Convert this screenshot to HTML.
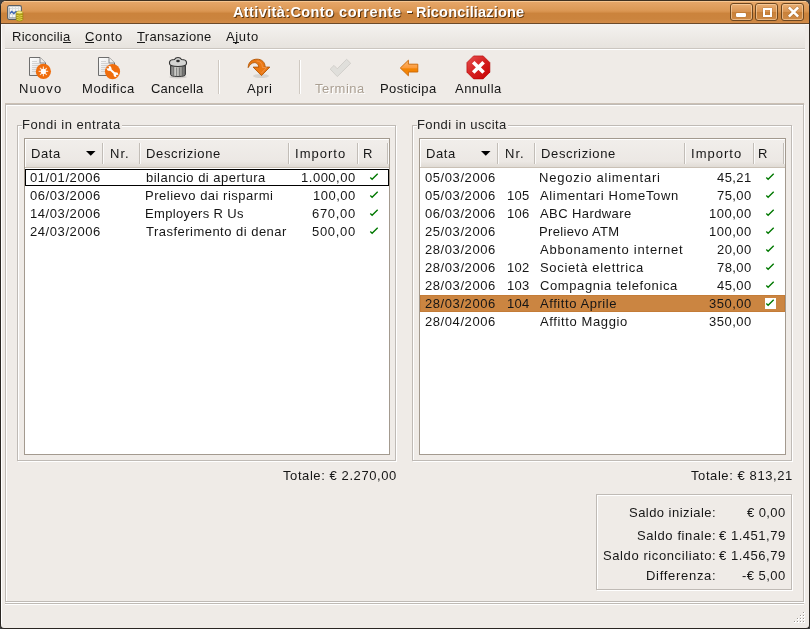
<!DOCTYPE html>
<html><head><meta charset="utf-8">
<style>
*{margin:0;padding:0;box-sizing:border-box}
html,body{width:810px;height:629px;overflow:hidden;background:#404244}
body{position:relative;font-family:"Liberation Sans",sans-serif}
.a{position:absolute}
.t{position:absolute;white-space:pre;will-change:transform;font-family:"Liberation Sans",sans-serif}
#win{left:0;top:0;width:810px;height:629px;background:#efebe7;border-left:1px solid #2a2622;border-right:1px solid #2a2622;border-bottom:1px solid #2a2622;border-top:1px solid #3f3020;border-radius:6px 6px 4px 4px;overflow:hidden}
#title{left:1px;top:1px;width:808px;height:23px;border-radius:5px 5px 0 0;
 background:linear-gradient(#f6c590 0,#f6c590 1px,#e6a668 1px,#db9753 10px,#cb833c 12.5px,#cb843e 18px,#d18b48 22px,#6b4a2a 22px,#6b4a2a 23px)}
.wb{position:absolute;top:3px;width:23px;height:18px;border:1px solid #6d4720;border-radius:3px;
 background:linear-gradient(#e9ae73,#d79250 50%,#c98139 50%,#cf8a46);box-shadow:inset 0 0 0 1px rgba(255,220,180,.55)}
#menubar{left:1px;top:24px;width:808px;height:25px;background:#efebe7}
#menuin{left:5px;top:24px;width:800px;height:25px;background:linear-gradient(#f4f2ef,#e7e3de);border-bottom:1px solid #cbc6c0}
.sep{position:absolute;top:60px;width:2px;height:34px;border-left:1px solid #cfc9c2;border-right:1px solid #fff}
.etch{position:absolute;border:1px solid #bfbab5;box-shadow:1px 1px 0 #fff, inset 1px 1px 0 #fff}
.tv{position:absolute;background:#fff;border:1px solid #a39a8f}
.hdr{position:absolute;left:0;top:0;height:29px;background:linear-gradient(#f1eeeb,#ece8e4 80%,#e0dbd5);border-bottom:1px solid #c9c0b5;box-shadow:inset 1px 1px 0 #fff}
.hs{position:absolute;top:4px;width:2px;height:21px;border-left:1px solid #c2bdb7;border-right:1px solid #fbfaf9}
.ck{position:absolute;color:#008000;font-size:13px}
</style></head><body>
<div id="win" class="a"></div>
<div id="title" class="a"></div>
<div class="wb" style="left:730px"></div>
<div class="wb" style="left:755px"></div>
<div class="wb" style="left:781px"></div>
<div class="a" style="left:1px;top:24px;width:1px;height:600px;background:#fff"></div>
<div class="a" style="left:1px;top:24px;width:808px;height:1px;background:#f8f6f4"></div>
<div id="menuin" class="a"></div>
<div class="a" style="left:5px;top:49px;width:800px;height:1px;background:#fff"></div>
<!-- mnemonics underlines -->
<div class="a" style="left:63px;top:42px;width:8px;height:1px;background:#1a1a1a"></div>
<div class="a" style="left:85px;top:42px;width:9px;height:1px;background:#1a1a1a"></div>
<div class="a" style="left:137px;top:42px;width:8px;height:1px;background:#1a1a1a"></div>
<div class="a" style="left:233px;top:42px;width:6px;height:1px;background:#1a1a1a"></div>
<!-- toolbar separators -->
<div class="sep" style="left:218px"></div>
<div class="sep" style="left:299px"></div>
<!-- content frame -->
<div class="a" style="left:5px;top:103px;width:799px;height:1px;background:#cbc0b4"></div>
<div class="etch" style="left:5px;top:104px;width:799px;height:498px"></div>
<!-- frames -->
<div class="etch" style="left:17px;top:125px;width:379px;height:336px"></div>
<div class="a" style="left:22px;top:118px;width:100px;height:12px;background:#efebe7"></div>
<div class="etch" style="left:412px;top:125px;width:380px;height:336px"></div>
<div class="a" style="left:417px;top:118px;width:91px;height:12px;background:#efebe7"></div>
<!-- treeviews -->
<div class="tv" style="left:24px;top:138px;width:366px;height:317px">
  <div class="hdr" style="width:364px"></div>
</div>
<div class="tv" style="left:419px;top:138px;width:367px;height:317px">
  <div class="hdr" style="width:365px"></div>
</div>
<!-- header separators -->
<div class="hs" style="left:102px;top:143px"></div>
<div class="hs" style="left:139px;top:143px"></div>
<div class="hs" style="left:288px;top:143px"></div>
<div class="hs" style="left:357px;top:143px"></div>
<div class="hs" style="left:387px;top:143px"></div>
<div class="hs" style="left:497px;top:143px"></div>
<div class="hs" style="left:534px;top:143px"></div>
<div class="hs" style="left:684px;top:143px"></div>
<div class="hs" style="left:753px;top:143px"></div>
<div class="hs" style="left:783px;top:143px"></div>
<!-- sort arrows -->
<svg class="a" style="left:85px;top:150px" width="12" height="8"><path d="M1 1H10.5L5.75 5.75Z" fill="#000"/></svg>
<svg class="a" style="left:480px;top:150px" width="12" height="8"><path d="M1 1H10.5L5.75 5.75Z" fill="#000"/></svg>
<!-- focus rect -->
<div class="a" style="left:25px;top:169px;width:364px;height:17px;border:1px solid #000"></div>
<!-- selected row -->
<div class="a" style="left:420px;top:295px;width:365px;height:17px;background:#cb8541;border:1px solid #c47c37"></div>
<!-- summary box -->
<div class="etch" style="left:596px;top:494px;width:196px;height:96px"></div>
<!-- statusbar separator -->
<div class="a" style="left:5px;top:603px;width:799px;height:2px;border-top:1px solid #bfbab5;border-bottom:1px solid #fff"></div>
<!--ICONS-->

<!-- window icon -->
<svg class="a" style="left:0;top:0" width="30" height="24" viewBox="0 0 30 24">
 <rect x="7.6" y="5.6" width="13.8" height="13.8" rx="1.6" fill="#f6f6f4" stroke="#5a5e62" stroke-width="1.1"/>
 <path d="M9.5 8.5h10M9.5 11.5h10M9.5 14.5h10M12.5 7v11M15.5 7v11M18.5 7v11" stroke="#dcdedd" stroke-width="1"/>
 <path d="M9.2 18V7.5M9.2 17.8h11" stroke="#9a9ea2" stroke-width="1"/>
 <path d="M10 13.5l1.8-2 2 2 2.3-2 1.5 .8" stroke="#3a62b0" stroke-width="1.3" fill="none"/>
 <path d="M16.2 12.5v7q0 1.5 3.3 1.5t3.3-1.5v-7z" fill="#c4b418" stroke="#8a7a0a" stroke-width=".6"/>
 <path d="M16.3 14.6q3.2 1.4 6.4 0M16.3 16.6q3.2 1.4 6.4 0M16.3 18.6q3.2 1.4 6.4 0" stroke="#8f800c" stroke-width=".7" fill="none"/>
 <path d="M16.6 15.4q2.9 1.2 5.8 0M16.6 17.4q2.9 1.2 5.8 0M16.6 19.4q2.9 1.2 5.8 0" stroke="#f0e46a" stroke-width=".7" fill="none"/>
 <ellipse cx="19.5" cy="12.4" rx="3.2" ry="1.4" fill="#f6ee8a" stroke="#9a8a10" stroke-width=".5"/>
</svg>
<!-- window buttons glyphs -->
<div class="a" style="left:736px;top:13px;width:10px;height:3.5px;background:#fff;border-radius:1px;box-shadow:0 0 1px rgba(80,40,0,.6)"></div>
<div class="a" style="left:762.5px;top:7.5px;width:9.5px;height:9.5px;border:2px solid #fff;box-shadow:0 0 1px rgba(80,40,0,.6), inset 0 0 1px rgba(80,40,0,.6)"></div>
<svg class="a" style="left:786px;top:5px" width="14" height="14" viewBox="-0.5 0 14 14">
 <path d="M3.3 3.3L10.7 10.7M10.7 3.3L3.3 10.7" stroke="#7a4a1a" stroke-width="3.6" stroke-linecap="square" opacity=".35"/>
 <path d="M3.3 3.3L10.7 10.7M10.7 3.3L3.3 10.7" stroke="#fff" stroke-width="2.6" stroke-linecap="square"/>
</svg>
<!-- Nuovo -->
<svg class="a" style="left:26px;top:54px" width="28" height="28" viewBox="26 54 28 28">
 <defs><linearGradient id="pg" x1="0" y1="0" x2="1" y2="1"><stop offset="0" stop-color="#ffffff"/><stop offset="1" stop-color="#d8d8d8"/></linearGradient></defs>
 <path d="M29.5 57.5H40L45.5 63V75.5H29.5Z" fill="url(#pg)" stroke="#6e6e6e"/>
 <path d="M40 57.5V63H45.5" fill="#eeeeee" stroke="#6e6e6e" stroke-width=".8"/>
 <path d="M32 61.5h5M32 63.5h8M32 65.5h9M32 67.5h9M32 69.5h7M32 71.5h6" stroke="#c4c4c4" stroke-width=".7"/>
 <circle cx="43.4" cy="71.4" r="7.6" fill="#f06d0c"/>
 <path d="M43.4 66.6v9.6M38.6 71.4h9.6M40 68l6.8 6.8M46.8 68l-6.8 6.8" stroke="#fff" stroke-width="1.2" opacity=".75"/>
 <circle cx="43.4" cy="71.4" r="2.6" fill="#fff" opacity=".95"/>
</svg>
<!-- Modifica -->
<svg class="a" style="left:94px;top:54px" width="28" height="28" viewBox="94 54 28 28">
 <path d="M98.5 57.5H109L114.5 63V75.5H98.5Z" fill="url(#pg)" stroke="#6e6e6e"/>
 <path d="M109 57.5V63H114.5" fill="#eeeeee" stroke="#6e6e6e" stroke-width=".8"/>
 <path d="M101 61.5h5M101 63.5h8M101 65.5h9M101 67.5h9M101 69.5h7M101 71.5h6" stroke="#c4c4c4" stroke-width=".7"/>
 <circle cx="112.5" cy="71.6" r="7.6" fill="#f06d0c"/>
 <path d="M109.2 68.6L115.8 74.6" stroke="#fff" stroke-width="2"/>
 <circle cx="109.1" cy="68.5" r="2.4" fill="#fff"/><circle cx="115.9" cy="74.7" r="2.4" fill="#fff"/>
 <circle cx="107.9" cy="67.4" r="1.1" fill="#f06d0c"/><circle cx="117.1" cy="75.8" r="1.1" fill="#f06d0c"/>
</svg>
<!-- Cancella -->
<svg class="a" style="left:164px;top:52px" width="28" height="28" viewBox="164 52 28 28">
 <defs><linearGradient id="tb" x1="0" x2="1"><stop offset="0" stop-color="#6a6a6a"/><stop offset=".35" stop-color="#d0d0cc"/><stop offset=".7" stop-color="#9a9a96"/><stop offset="1" stop-color="#5c5c5c"/></linearGradient></defs>
 <ellipse cx="178" cy="77" rx="9" ry="1.5" fill="#000" opacity=".12"/>
 <path d="M170.5 65.5V74.5Q170.5 76.5 178 76.5Q185.5 76.5 185.5 74.5V65.5Z" fill="url(#tb)" stroke="#3c3c3c"/>
 <path d="M173.5 67v8.5M176.5 67.5v9M179.5 67.5v9M182.5 67v8.5" stroke="#555" stroke-width=".8" opacity=".7"/>
 <path d="M169.5 62.5Q169.5 59.5 174.5 59.5Q175.5 57.5 178 57.5Q180.5 57.5 181.5 59.5Q186.5 59.5 186.5 62.5V63.5Q186.5 66.5 178 66.5Q169.5 66.5 169.5 63.5Z" fill="#d4d4d2" stroke="#333" stroke-width="1.1"/>
 <ellipse cx="178" cy="61" rx="1.8" ry="1.2" fill="#2a2a2a"/>
</svg>
<!-- Apri -->
<svg class="a" style="left:245px;top:54px" width="28" height="28" viewBox="245 54 28 28">
 <ellipse cx="261" cy="76" rx="8" ry="2" fill="#000" opacity=".1"/>
 <path d="M248.2 67.6C248.3 62 252 59.2 257 59.2C262 59.2 265 62.3 265.2 67.1H269.8L261.5 75.6L253.1 67.1H258.8C258.6 64.2 256.6 62.4 254.2 62.6C251.6 62.8 249.6 65 248.2 67.6Z" fill="#ea7812" stroke="#b25400" stroke-width=".9" stroke-linejoin="round"/>
 <path d="M256.5 61Q262 61 262.5 67.5H266.5L261.5 73" fill="none" stroke="#f5a060" stroke-width=".8" opacity=".8"/>
</svg>
<!-- Termina -->
<svg class="a" style="left:326px;top:56px" width="28" height="24" viewBox="326 56 28 24">
 <path d="M330.2 69.1L334 65.4L337.3 68.8L346.6 59.3L350.7 63.3L337.3 76.6Z" fill="#e0dfdb" stroke="#cfcdc8" stroke-width=".9" stroke-linejoin="round"/>
</svg>
<!-- Posticipa -->
<svg class="a" style="left:395px;top:54px" width="28" height="28" viewBox="395 54 28 28">
 <defs><linearGradient id="og" x1="0" y1="0" x2="0" y2="1"><stop offset="0" stop-color="#ffb870"/><stop offset=".5" stop-color="#fb9a3a"/><stop offset=".55" stop-color="#f28200"/><stop offset="1" stop-color="#f58a10"/></linearGradient></defs>
 <path d="M400.3 68L408.4 60.2V64.2H417.8V72H408.4V75.8Z" fill="url(#og)" stroke="#c96400" stroke-width=".9" stroke-linejoin="round"/>
</svg>
<!-- Annulla -->
<svg class="a" style="left:464px;top:53px" width="28" height="28" viewBox="464 53 28 28">
 <defs><linearGradient id="rg" x1="0" y1="0" x2="1" y2="1"><stop offset="0" stop-color="#e85050"/><stop offset=".5" stop-color="#d42020"/><stop offset="1" stop-color="#c80000"/></linearGradient></defs>
 <path d="M473.6 55.9H483.2L489.9 62.6V72.2L483.2 78.9H473.6L466.9 72.2V62.6Z" fill="url(#rg)" stroke="#b00000" stroke-width=".6"/>
 <path d="M473.2 62.2L483.6 72.6M483.6 62.2L473.2 72.6" stroke="#fff" stroke-width="3.6"/>
</svg>
<!-- checks -->
<svg class="a" style="left:369px;top:173px" width="11" height="11" viewBox="0 0 11 11"><path d="M1.3 4.6L3.1 6.3L8.7 0.7" fill="none" stroke="#007800" stroke-width="1.35"/></svg>
<svg class="a" style="left:369px;top:191px" width="11" height="11" viewBox="0 0 11 11"><path d="M1.3 4.6L3.1 6.3L8.7 0.7" fill="none" stroke="#007800" stroke-width="1.35"/></svg>
<svg class="a" style="left:369px;top:209px" width="11" height="11" viewBox="0 0 11 11"><path d="M1.3 4.6L3.1 6.3L8.7 0.7" fill="none" stroke="#007800" stroke-width="1.35"/></svg>
<svg class="a" style="left:369px;top:227px" width="11" height="11" viewBox="0 0 11 11"><path d="M1.3 4.6L3.1 6.3L8.7 0.7" fill="none" stroke="#007800" stroke-width="1.35"/></svg>
<svg class="a" style="left:765px;top:173px" width="11" height="11" viewBox="0 0 11 11"><path d="M1.3 4.6L3.1 6.3L8.7 0.7" fill="none" stroke="#007800" stroke-width="1.35"/></svg>
<svg class="a" style="left:765px;top:191px" width="11" height="11" viewBox="0 0 11 11"><path d="M1.3 4.6L3.1 6.3L8.7 0.7" fill="none" stroke="#007800" stroke-width="1.35"/></svg>
<svg class="a" style="left:765px;top:209px" width="11" height="11" viewBox="0 0 11 11"><path d="M1.3 4.6L3.1 6.3L8.7 0.7" fill="none" stroke="#007800" stroke-width="1.35"/></svg>
<svg class="a" style="left:765px;top:227px" width="11" height="11" viewBox="0 0 11 11"><path d="M1.3 4.6L3.1 6.3L8.7 0.7" fill="none" stroke="#007800" stroke-width="1.35"/></svg>
<svg class="a" style="left:765px;top:245px" width="11" height="11" viewBox="0 0 11 11"><path d="M1.3 4.6L3.1 6.3L8.7 0.7" fill="none" stroke="#007800" stroke-width="1.35"/></svg>
<svg class="a" style="left:765px;top:263px" width="11" height="11" viewBox="0 0 11 11"><path d="M1.3 4.6L3.1 6.3L8.7 0.7" fill="none" stroke="#007800" stroke-width="1.35"/></svg>
<svg class="a" style="left:765px;top:281px" width="11" height="11" viewBox="0 0 11 11"><path d="M1.3 4.6L3.1 6.3L8.7 0.7" fill="none" stroke="#007800" stroke-width="1.35"/></svg>
<div class="a" style="left:765px;top:298px;width:11px;height:11px;background:#fff;"></div><svg class="a" style="left:765px;top:299px" width="11" height="11" viewBox="0 0 11 11"><path d="M1.3 4.6L3.1 6.3L8.7 0.7" fill="none" stroke="#007800" stroke-width="1.35"/></svg>
<div class="a" style="left:794px;top:621px;width:2px;height:2px;background:#fff"></div><div class="a" style="left:794px;top:621px;width:1px;height:1px;background:#9a9590"></div><div class="a" style="left:797px;top:618px;width:2px;height:2px;background:#fff"></div><div class="a" style="left:797px;top:618px;width:1px;height:1px;background:#9a9590"></div><div class="a" style="left:797px;top:621px;width:2px;height:2px;background:#fff"></div><div class="a" style="left:797px;top:621px;width:1px;height:1px;background:#9a9590"></div><div class="a" style="left:800px;top:615px;width:2px;height:2px;background:#fff"></div><div class="a" style="left:800px;top:615px;width:1px;height:1px;background:#9a9590"></div><div class="a" style="left:800px;top:618px;width:2px;height:2px;background:#fff"></div><div class="a" style="left:800px;top:618px;width:1px;height:1px;background:#9a9590"></div><div class="a" style="left:800px;top:621px;width:2px;height:2px;background:#fff"></div><div class="a" style="left:800px;top:621px;width:1px;height:1px;background:#9a9590"></div><div class="a" style="left:803px;top:612px;width:2px;height:2px;background:#fff"></div><div class="a" style="left:803px;top:612px;width:1px;height:1px;background:#9a9590"></div><div class="a" style="left:803px;top:615px;width:2px;height:2px;background:#fff"></div><div class="a" style="left:803px;top:615px;width:1px;height:1px;background:#9a9590"></div><div class="a" style="left:803px;top:618px;width:2px;height:2px;background:#fff"></div><div class="a" style="left:803px;top:618px;width:1px;height:1px;background:#9a9590"></div><div class="a" style="left:803px;top:621px;width:2px;height:2px;background:#fff"></div><div class="a" style="left:803px;top:621px;width:1px;height:1px;background:#9a9590"></div>
<div class="a" style="left:407px;top:11px;width:5px;height:2px;background:#fff;box-shadow:1px 1px 0 rgba(50,25,0,.75)"></div>
<div class="t" style="left:12.00px;top:30px;font-size:13px;line-height:13px;font-weight:400;color:#161616;letter-spacing:0.289px;">Riconcilia</div>
<div class="t" style="left:85.00px;top:30px;font-size:13px;line-height:13px;font-weight:400;color:#161616;letter-spacing:0.635px;">Conto</div>
<div class="t" style="left:137.00px;top:30px;font-size:13px;line-height:13px;font-weight:400;color:#161616;letter-spacing:0.317px;">Transazione</div>
<div class="t" style="left:226.00px;top:30px;font-size:13px;line-height:13px;font-weight:400;color:#161616;letter-spacing:0.650px;">Ajuto</div>
<div class="t" style="left:19.00px;top:82px;font-size:13px;line-height:13px;font-weight:400;color:#161616;letter-spacing:1.163px;">Nuovo</div>
<div class="t" style="left:82.00px;top:82px;font-size:13px;line-height:13px;font-weight:400;color:#161616;letter-spacing:0.546px;">Modifica</div>
<div class="t" style="left:151.00px;top:82px;font-size:13px;line-height:13px;font-weight:400;color:#161616;letter-spacing:0.235px;">Cancella</div>
<div class="t" style="left:247.00px;top:82px;font-size:13px;line-height:13px;font-weight:400;color:#161616;letter-spacing:0.590px;">Apri</div>
<div class="t" style="left:315.00px;top:82px;font-size:13px;line-height:13px;font-weight:400;color:#aa9f92;letter-spacing:0.499px;text-shadow:1px 1px 0 #fff;">Termina</div>
<div class="t" style="left:380.00px;top:82px;font-size:13px;line-height:13px;font-weight:400;color:#161616;letter-spacing:0.435px;">Posticipa</div>
<div class="t" style="left:455.00px;top:82px;font-size:13px;line-height:13px;font-weight:400;color:#161616;letter-spacing:0.477px;">Annulla</div>
<div class="t" style="left:22.00px;top:118px;font-size:13px;line-height:13px;font-weight:400;color:#222;letter-spacing:0.526px;">Fondi in entrata</div>
<div class="t" style="left:417.00px;top:118px;font-size:13px;line-height:13px;font-weight:400;color:#222;letter-spacing:0.386px;">Fondi in uscita</div>
<div class="t" style="left:31.00px;top:147px;font-size:13px;line-height:13px;font-weight:400;color:#161616;letter-spacing:0.590px;">Data</div>
<div class="t" style="left:110.00px;top:147px;font-size:13px;line-height:13px;font-weight:400;color:#161616;letter-spacing:1.000px;">Nr.</div>
<div class="t" style="left:146.00px;top:147px;font-size:13px;line-height:13px;font-weight:400;color:#161616;letter-spacing:0.632px;">Descrizione</div>
<div class="t" style="left:295.00px;top:147px;font-size:13px;line-height:13px;font-weight:400;color:#161616;letter-spacing:1.026px;">Importo</div>
<div class="t" style="left:363.00px;top:147px;font-size:13px;line-height:13px;font-weight:400;color:#161616;letter-spacing:0.000px;">R</div>
<div class="t" style="left:426.00px;top:147px;font-size:13px;line-height:13px;font-weight:400;color:#161616;letter-spacing:0.590px;">Data</div>
<div class="t" style="left:505.00px;top:147px;font-size:13px;line-height:13px;font-weight:400;color:#161616;letter-spacing:1.000px;">Nr.</div>
<div class="t" style="left:541.00px;top:147px;font-size:13px;line-height:13px;font-weight:400;color:#161616;letter-spacing:0.632px;">Descrizione</div>
<div class="t" style="left:691.00px;top:147px;font-size:13px;line-height:13px;font-weight:400;color:#161616;letter-spacing:1.026px;">Importo</div>
<div class="t" style="left:758.00px;top:147px;font-size:13px;line-height:13px;font-weight:400;color:#161616;letter-spacing:0.000px;">R</div>
<div class="t" style="left:30.00px;top:171px;font-size:13px;line-height:13px;font-weight:400;color:#161616;letter-spacing:0.574px;">01/01/2006</div>
<div class="t" style="left:146.00px;top:171px;font-size:13px;line-height:13px;font-weight:400;color:#161616;letter-spacing:0.494px;">bilancio di apertura</div>
<div class="t" style="left:301.00px;top:171px;font-size:13px;line-height:13px;font-weight:400;color:#161616;letter-spacing:0.518px;">1.000,00</div>
<div class="t" style="left:30.00px;top:189px;font-size:13px;line-height:13px;font-weight:400;color:#161616;letter-spacing:0.574px;">06/03/2006</div>
<div class="t" style="left:145.00px;top:189px;font-size:13px;line-height:13px;font-weight:400;color:#161616;letter-spacing:0.506px;">Prelievo dai risparmi</div>
<div class="t" style="left:313.00px;top:189px;font-size:13px;line-height:13px;font-weight:400;color:#161616;letter-spacing:0.494px;">100,00</div>
<div class="t" style="left:30.00px;top:207px;font-size:13px;line-height:13px;font-weight:400;color:#161616;letter-spacing:0.574px;">14/03/2006</div>
<div class="t" style="left:145.00px;top:207px;font-size:13px;line-height:13px;font-weight:400;color:#161616;letter-spacing:0.353px;">Employers R Us</div>
<div class="t" style="left:312.00px;top:207px;font-size:13px;line-height:13px;font-weight:400;color:#161616;letter-spacing:0.694px;">670,00</div>
<div class="t" style="left:30.00px;top:225px;font-size:13px;line-height:13px;font-weight:400;color:#161616;letter-spacing:0.574px;">24/03/2006</div>
<div class="t" style="left:146.00px;top:225px;font-size:13px;line-height:13px;font-weight:400;color:#161616;letter-spacing:0.478px;">Trasferimento di denar</div>
<div class="t" style="left:312.00px;top:225px;font-size:13px;line-height:13px;font-weight:400;color:#161616;letter-spacing:0.694px;">500,00</div>
<div class="t" style="left:425.00px;top:171px;font-size:13px;line-height:13px;font-weight:400;color:#161616;letter-spacing:0.574px;">05/03/2006</div>
<div class="t" style="left:539.00px;top:171px;font-size:13px;line-height:13px;font-weight:400;color:#161616;letter-spacing:0.778px;">Negozio alimentari</div>
<div class="t" style="left:717.00px;top:171px;font-size:13px;line-height:13px;font-weight:400;color:#161616;letter-spacing:0.425px;">45,21</div>
<div class="t" style="left:425.00px;top:189px;font-size:13px;line-height:13px;font-weight:400;color:#161616;letter-spacing:0.574px;">05/03/2006</div>
<div class="t" style="left:507.00px;top:189px;font-size:13px;line-height:13px;font-weight:400;color:#161616;letter-spacing:0.270px;">105</div>
<div class="t" style="left:540.00px;top:189px;font-size:13px;line-height:13px;font-weight:400;color:#161616;letter-spacing:0.655px;">Alimentari HomeTown</div>
<div class="t" style="left:717.00px;top:189px;font-size:13px;line-height:13px;font-weight:400;color:#161616;letter-spacing:0.425px;">75,00</div>
<div class="t" style="left:425.00px;top:207px;font-size:13px;line-height:13px;font-weight:400;color:#161616;letter-spacing:0.574px;">06/03/2006</div>
<div class="t" style="left:507.00px;top:207px;font-size:13px;line-height:13px;font-weight:400;color:#161616;letter-spacing:0.270px;">106</div>
<div class="t" style="left:540.00px;top:207px;font-size:13px;line-height:13px;font-weight:400;color:#161616;letter-spacing:0.412px;">ABC Hardware</div>
<div class="t" style="left:709.00px;top:207px;font-size:13px;line-height:13px;font-weight:400;color:#161616;letter-spacing:0.494px;">100,00</div>
<div class="t" style="left:425.00px;top:225px;font-size:13px;line-height:13px;font-weight:400;color:#161616;letter-spacing:0.574px;">25/03/2006</div>
<div class="t" style="left:539.00px;top:225px;font-size:13px;line-height:13px;font-weight:400;color:#161616;letter-spacing:0.343px;">Prelievo ATM</div>
<div class="t" style="left:709.00px;top:225px;font-size:13px;line-height:13px;font-weight:400;color:#161616;letter-spacing:0.494px;">100,00</div>
<div class="t" style="left:425.00px;top:243px;font-size:13px;line-height:13px;font-weight:400;color:#161616;letter-spacing:0.574px;">28/03/2006</div>
<div class="t" style="left:540.00px;top:243px;font-size:13px;line-height:13px;font-weight:400;color:#161616;letter-spacing:0.773px;">Abbonamento internet</div>
<div class="t" style="left:717.00px;top:243px;font-size:13px;line-height:13px;font-weight:400;color:#161616;letter-spacing:0.425px;">20,00</div>
<div class="t" style="left:425.00px;top:261px;font-size:13px;line-height:13px;font-weight:400;color:#161616;letter-spacing:0.574px;">28/03/2006</div>
<div class="t" style="left:507.00px;top:261px;font-size:13px;line-height:13px;font-weight:400;color:#161616;letter-spacing:0.270px;">102</div>
<div class="t" style="left:540.00px;top:261px;font-size:13px;line-height:13px;font-weight:400;color:#161616;letter-spacing:0.671px;">Società elettrica</div>
<div class="t" style="left:717.00px;top:261px;font-size:13px;line-height:13px;font-weight:400;color:#161616;letter-spacing:0.425px;">78,00</div>
<div class="t" style="left:425.00px;top:279px;font-size:13px;line-height:13px;font-weight:400;color:#161616;letter-spacing:0.574px;">28/03/2006</div>
<div class="t" style="left:507.00px;top:279px;font-size:13px;line-height:13px;font-weight:400;color:#161616;letter-spacing:0.270px;">103</div>
<div class="t" style="left:540.00px;top:279px;font-size:13px;line-height:13px;font-weight:400;color:#161616;letter-spacing:0.604px;">Compagnia telefonica</div>
<div class="t" style="left:717.00px;top:279px;font-size:13px;line-height:13px;font-weight:400;color:#161616;letter-spacing:0.425px;">45,00</div>
<div class="t" style="left:425.00px;top:297px;font-size:13px;line-height:13px;font-weight:400;color:#161616;letter-spacing:0.574px;">28/03/2006</div>
<div class="t" style="left:507.00px;top:297px;font-size:13px;line-height:13px;font-weight:400;color:#161616;letter-spacing:0.270px;">104</div>
<div class="t" style="left:540.00px;top:297px;font-size:13px;line-height:13px;font-weight:400;color:#161616;letter-spacing:0.568px;">Affitto Aprile</div>
<div class="t" style="left:709.00px;top:297px;font-size:13px;line-height:13px;font-weight:400;color:#161616;letter-spacing:0.494px;">350,00</div>
<div class="t" style="left:425.00px;top:315px;font-size:13px;line-height:13px;font-weight:400;color:#161616;letter-spacing:0.574px;">28/04/2006</div>
<div class="t" style="left:540.00px;top:315px;font-size:13px;line-height:13px;font-weight:400;color:#161616;letter-spacing:0.614px;">Affitto Maggio</div>
<div class="t" style="left:709.00px;top:315px;font-size:13px;line-height:13px;font-weight:400;color:#161616;letter-spacing:0.494px;">350,00</div>
<div class="t" style="left:283.00px;top:469px;font-size:13px;line-height:13px;font-weight:400;color:#161616;letter-spacing:0.581px;">Totale: € 2.270,00</div>
<div class="t" style="left:691.00px;top:469px;font-size:13px;line-height:13px;font-weight:400;color:#161616;letter-spacing:0.581px;">Totale: € 813,21</div>
<div class="t" style="left:629.00px;top:506px;font-size:13px;line-height:13px;font-weight:400;color:#161616;letter-spacing:0.457px;">Saldo iniziale:</div>
<div class="t" style="left:747.00px;top:506px;font-size:13px;line-height:13px;font-weight:400;color:#161616;letter-spacing:0.417px;">€ 0,00</div>
<div class="t" style="left:637.00px;top:529px;font-size:13px;line-height:13px;font-weight:400;color:#161616;letter-spacing:0.588px;">Saldo finale:</div>
<div class="t" style="left:719.00px;top:529px;font-size:13px;line-height:13px;font-weight:400;color:#161616;letter-spacing:0.532px;">€ 1.451,79</div>
<div class="t" style="left:603.00px;top:549px;font-size:13px;line-height:13px;font-weight:400;color:#161616;letter-spacing:0.596px;">Saldo riconciliato:</div>
<div class="t" style="left:719.00px;top:549px;font-size:13px;line-height:13px;font-weight:400;color:#161616;letter-spacing:0.532px;">€ 1.456,79</div>
<div class="t" style="left:646.00px;top:569px;font-size:13px;line-height:13px;font-weight:400;color:#161616;letter-spacing:0.699px;">Differenza:</div>
<div class="t" style="left:742.00px;top:569px;font-size:13px;line-height:13px;font-weight:400;color:#161616;letter-spacing:0.460px;">-€ 5,00</div>
<div class="t" style="left:233.00px;top:5px;font-size:14.5px;line-height:14.5px;font-weight:700;color:#ffffff;letter-spacing:0.386px;text-shadow:1px 1px 0 rgba(50,25,0,.75);">Attività:Conto</div>
<div class="t" style="left:339.00px;top:5px;font-size:14.5px;line-height:14.5px;font-weight:700;color:#ffffff;letter-spacing:0.578px;text-shadow:1px 1px 0 rgba(50,25,0,.75);">corrente</div>
<div class="t" style="left:416.00px;top:5px;font-size:14.5px;line-height:14.5px;font-weight:700;color:#ffffff;letter-spacing:0.180px;text-shadow:1px 1px 0 rgba(50,25,0,.75);">Riconciliazione</div>
</body></html>
